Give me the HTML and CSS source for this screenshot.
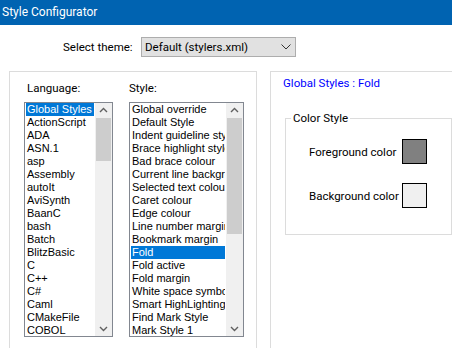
FILE: index.html
```html
<!DOCTYPE html>
<html lang="en">
<head>
<meta charset="UTF-8">
<title>Style Configurator</title>
<link rel="stylesheet" href="styles.css">
</head>
<body>

<div class="titlebar">Style Configurator</div>

<div class="theme-row">
	<span class="theme-label">Select theme:</span>
	<div class="combo">
		<span>Default (stylers.xml)</span>
		<svg class="combo-arrow" viewBox="0 0 10 6"><polyline points="0.5,0.5 5,5 9.5,0.5"/></svg>
	</div>
</div>

<div class="main">
	<div class="panel lists">
		<div class="col">
			<div class="col-label lang-label">Language:</div>
			<div class="listbox lang">
				<ul class="items">
					<li class="sel">Global Styles</li>
					<li>ActionScript</li>
					<li>ADA</li>
					<li>ASN.1</li>
					<li>asp</li>
					<li>Assembly</li>
					<li>autoIt</li>
					<li>AviSynth</li>
					<li>BaanC</li>
					<li>bash</li>
					<li>Batch</li>
					<li>BlitzBasic</li>
					<li>C</li>
					<li>C++</li>
					<li>C#</li>
					<li>Caml</li>
					<li>CMakeFile</li>
					<li>COBOL</li>
				</ul>
				<div class="scrollbar">
					<svg class="sb-btn" viewBox="0 0 17 15"><polyline points="5,9 8.5,5.5 12,9"/></svg>
					<div class="track"><div class="thumb"></div></div>
					<svg class="sb-btn" viewBox="0 0 17 15"><polyline points="5,6 8.5,9.5 12,6"/></svg>
				</div>
			</div>
		</div>
		<div class="col">
			<div class="col-label">Style:</div>
			<div class="listbox style">
				<ul class="items">
					<li>Global override</li>
					<li>Default Style</li>
					<li>Indent guideline style</li>
					<li>Brace highlight style</li>
					<li>Bad brace colour</li>
					<li>Current line background colour</li>
					<li>Selected text colour</li>
					<li>Caret colour</li>
					<li>Edge colour</li>
					<li>Line number margin</li>
					<li>Bookmark margin</li>
					<li class="sel">Fold</li>
					<li>Fold active</li>
					<li>Fold margin</li>
					<li>White space symbol</li>
					<li>Smart HighLighting</li>
					<li>Find Mark Style</li>
					<li>Mark Style 1</li>
				</ul>
				<div class="scrollbar">
					<svg class="sb-btn" viewBox="0 0 17 15"><polyline points="5,9 8.5,5.5 12,9"/></svg>
					<div class="track"><div class="thumb"></div></div>
					<svg class="sb-btn" viewBox="0 0 17 15"><polyline points="5,6 8.5,9.5 12,6"/></svg>
				</div>
			</div>
		</div>
	</div>

	<div class="panel detail">
		<div class="detail-title">Global Styles : Fold</div>
		<fieldset class="group">
			<legend>Color Style</legend>
			<div class="color-row">
				<span class="color-label">Foreground color</span>
				<span class="swatch fg"></span>
			</div>
			<div class="color-row">
				<span class="color-label">Background color</span>
				<span class="swatch bg"></span>
			</div>
		</fieldset>
	</div>
</div>

</body>
</html>
```

FILE: styles.css
```css
html, body {
	margin: 0;
	background: #fff;
	overflow: hidden;
}
body {
	width: 452px;
	height: 348px;
	font-family: Roboto, "Liberation Sans", sans-serif;
	font-size: 11.5px;
	color: #000;
}

.titlebar {
	height: 25px;
	line-height: 25px;
	padding-left: 2px;
	background: #0063b1;
	color: #fff;
	font-size: 12px;
}

.theme-row {
	display: flex;
	align-items: center;
	margin-top: 12px;
	height: 20px;
}
.theme-label {
	margin-left: 63px;
	width: 78px;
}
.combo {
	box-sizing: border-box;
	width: 155px;
	height: 20px;
	border: 1px solid #adadad;
	background: #e1e1e1;
	display: flex;
	align-items: center;
	justify-content: space-between;
	padding: 0 4px 0 3px;
}
.combo-arrow {
	width: 10px;
	height: 6px;
	fill: none;
	stroke: #333;
	stroke-width: 1;
}

.main {
	display: flex;
	gap: 13px;
	margin-top: 14px;
	padding-left: 9px;
}
.panel {
	box-sizing: border-box;
	flex-shrink: 0;
	height: 300px;
	border: 1px solid #dcdcdc;
}
.lists {
	width: 248px;
	display: flex;
	gap: 16px;
	padding-left: 14px;
}
.col-label {
	height: 27px;
	line-height: 27px;
	margin-top: 3px;
}
.lang-label {
	padding-left: 3px;
}

.listbox {
	box-sizing: border-box;
	height: 235px;
	border: 1px solid #828790;
	display: flex;
	font-family: "Liberation Sans", sans-serif;
	font-size: 11px;
}
.lang { width: 89px; }
.style { width: 115px; }
.items {
	flex: 1;
	list-style: none;
	margin: 0;
	padding: 0 1px;
	overflow: hidden;
}
.items li {
	height: 13px;
	line-height: 13px;
	white-space: nowrap;
	overflow: hidden;
	padding-left: 1px;
}
.items li.sel {
	background: #0078d7;
	color: #fff;
}

.scrollbar {
	width: 17px;
	background: #f0f0f0;
	display: flex;
	flex-direction: column;
}
.sb-btn {
	width: 17px;
	height: 15px;
	fill: none;
	stroke: #606060;
	stroke-width: 1.4;
}
.track {
	flex: 1;
}
.thumb {
	margin: 0 1px;
	background: #cdcdcd;
}
.lang .thumb { height: 43px; }
.style .thumb { height: 116px; }

.detail {
	width: 200px;
	padding-left: 12px;
}
.detail-title {
	color: #0000ff;
	margin-top: 3px;
	height: 16px;
	line-height: 16px;
}
.group {
	box-sizing: border-box;
	width: 167px;
	height: 125px;
	margin: 19px 0 0 2px;
	border: 1px solid #dcdcdc;
	padding: 13px 0 0 0;
}
.group legend {
	padding: 0 2px;
	margin-left: 5px;
	height: 16px;
	line-height: 16px;
}
.color-row {
	display: flex;
	align-items: center;
	height: 25px;
	margin-bottom: 19px;
	padding-left: 23px;
}
.color-label {
	width: 93px;
	white-space: nowrap;
}
.swatch {
	box-sizing: border-box;
	width: 25px;
	height: 25px;
	border: 1px solid #000;
}
.swatch.fg { background: #808080; }
.swatch.bg { background: #f0f0f0; }
```
